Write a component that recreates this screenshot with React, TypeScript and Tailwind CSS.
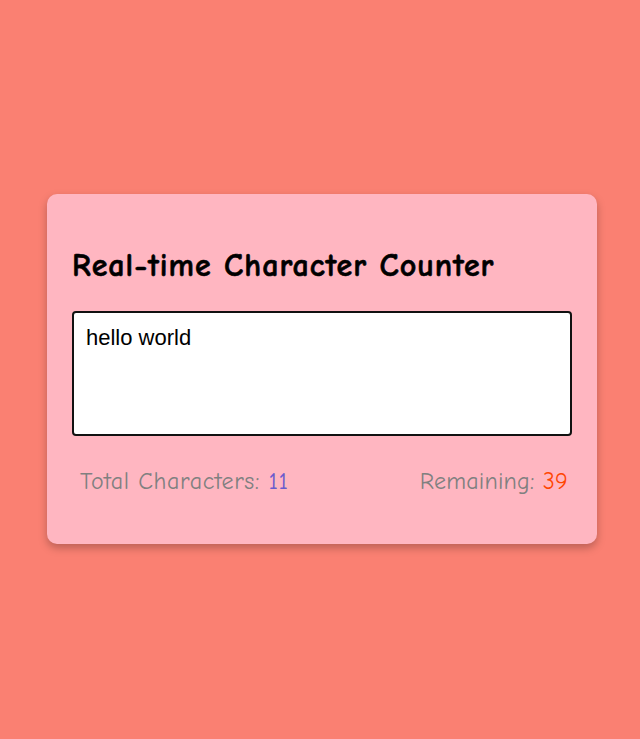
import { useState } from "react";

const MAX = 50;

export default function App() {
	const [text, setText] = useState("hello world");

	return (
		<div className="min-h-screen bg-[#fa8072] flex items-center justify-center pl-[4px] pb-[1px] font-['Comic_Sans_MS','Comic_Neue',cursive]">
			<div className="w-[550px] h-[350px] bg-[#ffb6c1] rounded-[10px] px-[25px] pt-[50px] shadow-[0_4px_8px_rgba(0,0,0,0.25)]">
				{/* Title */}
				<h1 className="text-[32px] font-bold text-black leading-[44px] tracking-[1px] [-webkit-text-stroke:0.6px_black]">
					Real-time Character Counter
				</h1>

				{/* Input */}
				<textarea
					value={text}
					maxLength={MAX}
					onChange={(e) => setText(e.target.value)}
					className="mt-[23px] block w-full h-[125px] bg-white border-2 border-[#111] rounded-[4px] pl-[12px] pr-[12px] pt-[8px] pb-[10px] text-[22px] text-black resize-none outline-none font-['Liberation_Sans',Arial,sans-serif]"
				/>

				{/* Stats */}
				<div className="flex justify-between pl-[8px] pr-[4px] mt-[27px] text-[24px] tracking-[0.6px] text-[#808080]">
					<span>
						Total Characters: <span className="text-[#6a5acd]">{text.length}</span>
					</span>
					<span className="tracking-[0.2px]">
						Remaining: <span className="text-[#ff4500]">{MAX - text.length}</span>
					</span>
				</div>
			</div>
		</div>
	);
}
